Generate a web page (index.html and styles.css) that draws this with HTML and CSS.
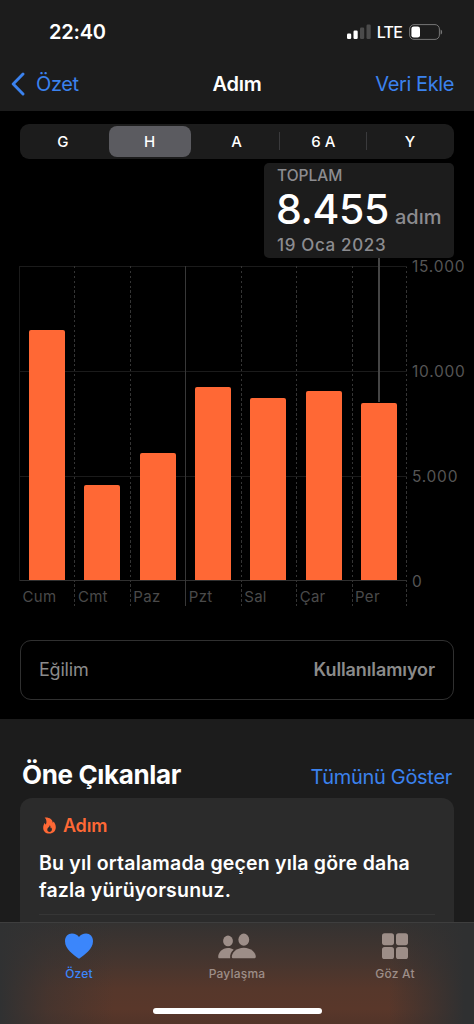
FILE: index.html
```html
<!DOCTYPE html>
<html lang="tr">
    <head>
        <meta charset="UTF-8" />
        <meta name="viewport" content="width=device-width, initial-scale=1.0" />
        <title>Adım</title>
        <link rel="stylesheet" href="styles.css">
    </head>
    <body>
        <header>
            <div class="status">
                <span class="time">22:40</span>
                <div class="indicators">
                    <svg class="signal" width="24" height="16" viewBox="0 0 24 16">
                        <rect x="0" y="9.5" width="4.2" height="5.5" rx="1.2" fill="#fff" />
                        <rect x="6.5" y="6.5" width="4.2" height="8.5" rx="1.2" fill="#fff" />
                        <rect x="13" y="3.5" width="4.2" height="11.5" rx="1.2" fill="#4b4b4b" />
                        <rect x="19.5" y="0.5" width="4.2" height="14.5" rx="1.2" fill="#4b4b4b" />
                    </svg>
                    <span class="network">LTE</span>
                    <svg class="battery" width="34" height="16" viewBox="0 0 34 16">
                        <rect x="0.6" y="0.6" width="29.8" height="14.8" rx="4.4" fill="none" stroke="#757575" />
                        <rect x="2.4" y="2.4" width="8.6" height="11.2" rx="2.4" fill="#fff" />
                        <path d="M31.6 5.4c2 .8 2 4.4 0 5.2z" fill="#757575" />
                    </svg>
                </div>
            </div>
            <nav class="navbar">
                <a class="back">
                    <svg width="14" height="24" viewBox="0 0 14 24">
                        <path d="M12 2 2.2 12 12 22" fill="none" stroke="currentColor" stroke-width="2.9" stroke-linecap="round" stroke-linejoin="round" />
                    </svg>
                    <span>Özet</span>
                </a>
                <h1>Adım</h1>
                <a class="add">Veri Ekle</a>
            </nav>
        </header>

        <main>
            <section class="steps">
                <div class="segments">
                    <div class="segment">G</div>
                    <div class="segment selected"><span>H</span></div>
                    <div class="segment">A</div>
                    <div class="segment divided">6 A</div>
                    <div class="segment divided">Y</div>
                </div>

                <div class="chart">
                    <div class="plot">
                        <div class="column"><div class="bar" style="height: 250px"></div><span>Cum</span></div>
                        <div class="column"><div class="bar" style="height: 95px"></div><span>Cmt</span></div>
                        <div class="column"><div class="bar" style="height: 127px"></div><span>Paz</span></div>
                        <div class="column week"><div class="bar" style="height: 193px"></div><span>Pzt</span></div>
                        <div class="column"><div class="bar" style="height: 182.5px"></div><span>Sal</span></div>
                        <div class="column"><div class="bar" style="height: 189.5px"></div><span>Çar</span></div>
                        <div class="column"><div class="bar" style="height: 177px"></div><span>Per</span></div>
                    </div>
                    <div class="scale">
                        <span>15.000</span>
                        <span>10.000</span>
                        <span>5.000</span>
                        <span>0</span>
                    </div>
                    <div class="marker"></div>
                    <div class="callout">
                        <div class="callout-title">TOPLAM</div>
                        <div class="callout-value"><b>8.455</b><span>adım</span></div>
                        <div class="callout-date">19 Oca 2023</div>
                    </div>
                </div>

                <div class="trend">
                    <span class="trend-name">Eğilim</span>
                    <span class="trend-value">Kullanılamıyor</span>
                </div>
            </section>

            <section class="highlights">
                <div class="highlights-head">
                    <h2>Öne Çıkanlar</h2>
                    <a>Tümünü Göster</a>
                </div>
                <article class="card">
                    <div class="card-title">
                        <svg width="13" height="17" viewBox="0 0 13 17">
                            <path fill="currentColor" fill-rule="evenodd" d="M1.6.5C6.500.1 9.600 2.300 9.700 5.700c.5-.3.7-.7.8-1.200C12 6.200 12.800 8.100 12.800 10.200c0 3.800-2.500 6.300-6.400 6.300S.2 14.200.2 10.700c0-2.100.7-3.600 1.700-4.900.1 1 .4 1.500 1 1.800C3.900 5.200 3.700 2.500 1.600.5zM6.700 8c.3 1.900-2.400 2.600-2.400 4.700 0 1.300.9 2.200 2.200 2.200s2.400-.9 2.400-2.300c0-.9-.3-1.500-.8-2-.1.500-.3.8-.6 1 .1-1.300.1-2.700-.8-3.600z" />
                        </svg>
                        <span>Adım</span>
                    </div>
                    <p>Bu yıl ortalamada geçen yıla göre daha<br>fazla yürüyorsunuz.</p>
                    <hr>
                </article>
            </section>
        </main>

        <footer class="tabs">
            <div class="tab active">
                <svg width="30" height="28" viewBox="0 0 30 28">
                    <path fill="currentColor" d="M15 26.7C9.5 22.8 1 17.2 1 9.2 1 4.7 4 1.6 7.900 1.600c3.100 0 5.700 1.200 7.100 3.500 1.400-2.300 4-3.500 7.100-3.500 3.900 0 6.900 3.100 6.900 7.600 0 8-8.500 13.600-14 17.500z" />
                </svg>
                <span>Özet</span>
            </div>
            <div class="tab">
                <svg width="38" height="28" viewBox="0 0 38 28">
                    <g fill="currentColor">
                        <ellipse cx="10" cy="8.9" rx="4.9" ry="5.3" />
                        <ellipse cx="25.8" cy="7.7" rx="5.4" ry="6.1" />
                        <path d="M12.2 26.3H1.4C.6 26.3.2 25.8.2 25c0-4.300 4-8.900 9.800-8.900 2.200 0 4.200.6 5.700 1.700-2.300 1.800-4.100 4.900-3.500 8.500z" />
                        <path d="M15.7 26.3c-1.300 0-1.900-.5-1.900-1.500 0-3.700 4.500-9 12-9s12 5.300 12 9c0 1-.6 1.500-1.900 1.500z" />
                    </g>
                </svg>
                <span>Paylaşma</span>
            </div>
            <div class="tab">
                <svg width="26" height="28" viewBox="0 0 26 28">
                    <g fill="currentColor">
                        <rect x="0" y="1.2" width="12" height="12" rx="2.6" />
                        <rect x="14" y="1.2" width="12" height="12" rx="2.6" />
                        <rect x="0" y="15" width="12" height="12" rx="2.6" />
                        <rect x="14" y="15" width="12" height="12" rx="2.6" />
                    </g>
                </svg>
                <span>Göz At</span>
            </div>
            <div class="home"></div>
        </footer>
    </body>
</html>
```
FILE: styles.css
```css
:root {
    --blue: #3b82ee;
    --orange: #ff6835;
    --panel: #1c1c1c;
    --grid: #1b1b1b;
    --dash: #343434;
}

* {
    box-sizing: border-box;
}

body {
    margin: 0;
    height: 1024px;
    display: flex;
    flex-direction: column;
    overflow: hidden;
    background: #000;
    color: #fff;
    font-family: Inter, "Liberation Sans", sans-serif;
}

h1,
h2,
p {
    margin: 0;
}

/* header */

header {
    flex: none;
    height: 111px;
    background: var(--panel);
}

.status {
    height: 62px;
    padding: 2px 31px 0 49px;
    display: flex;
    align-items: center;
    justify-content: space-between;
}

.time {
    font-size: 20px;
    font-weight: 600;
    letter-spacing: -0.2px;
}

.indicators {
    display: flex;
    align-items: center;
}

.network {
    margin: 0 7px 0 6px;
    font-size: 16px;
    font-weight: 500;
    letter-spacing: -0.8px;
}

.navbar {
    height: 44px;
    padding: 0 20px 0 11px;
    display: grid;
    grid-template-columns: 1fr auto 1fr;
    align-items: center;
    font-size: 20px;
    letter-spacing: -0.4px;
}

.back {
    display: flex;
    align-items: center;
    gap: 11px;
    color: var(--blue);
}

.add {
    color: var(--blue);
    text-align: right;
}

h1 {
    margin-left: 9px;
    font-size: 20px;
    font-weight: 600;
    letter-spacing: -0.3px;
}

/* chart */

.steps {
    height: 608px;
    padding: 12.5px 20px 0;
}

.segments {
    height: 35px;
    display: grid;
    grid-template-columns: repeat(5, 1fr);
    border-radius: 9px;
    background: var(--panel);
    font-size: 15px;
    font-weight: 500;
}

.segment {
    margin-left: -1px;
    display: flex;
    align-items: center;
    justify-content: center;
}

.selected span {
    width: 82px;
    height: 31px;
    line-height: 31px;
    border-radius: 8px;
    background: #5b5b60;
    text-align: center;
}

.divided {
    background: linear-gradient(#3a3a3c, #3a3a3c) left center / 1px 18px no-repeat;
}

.chart {
    position: relative;
    height: 340px;
    margin: 107px -20px 0;
    padding-left: 19px;
    display: flex;
}

.plot {
    width: 388px;
    height: 340px;
    display: grid;
    grid-template-columns: repeat(7, 1fr);
    background:
        linear-gradient(var(--grid), var(--grid)) 0 0 / 100% 1px no-repeat,
        linear-gradient(var(--grid), var(--grid)) 0 105px / 100% 1px no-repeat,
        linear-gradient(var(--grid), var(--grid)) 0 210px / 100% 1px no-repeat,
        linear-gradient(#303030, #303030) 0 314px / 100% 1px no-repeat,
        repeating-linear-gradient(var(--dash) 0 2.5px, transparent 2.5px 4.9px) right 0 / 1px 100% no-repeat;
}

.column {
    height: 340px;
    display: grid;
    grid-template-rows: 314.5px 1fr;
    background: repeating-linear-gradient(var(--dash) 0 2.5px, transparent 2.5px 4.9px) 0 0 / 1px 100% no-repeat;
}

.column:first-child {
    background: linear-gradient(var(--grid), var(--grid)) 0 0 / 1px 315px no-repeat;
}

.week {
    background: linear-gradient(#383838, #383838) 0 0 / 1px 100% no-repeat;
}

.bar {
    width: 36px;
    align-self: end;
    justify-self: center;
    border-radius: 2px 2px 0 0;
    background: var(--orange);
}

.column span {
    padding: 7px 0 0 3.5px;
    font-size: 15px;
    line-height: 19px;
    letter-spacing: 0.3px;
    color: #4a4a4a;
}

.scale {
    height: 334px;
    margin: -9px 0 0 5px;
    display: flex;
    flex-direction: column;
    justify-content: space-between;
    font-size: 15.5px;
    line-height: 19px;
    letter-spacing: 0.75px;
    color: #555;
}

/* selection marker and its callout lie over the chart */

.marker {
    position: absolute;
    left: 378px;
    top: -9px;
    width: 2px;
    height: 145px;
    background: #454545;
}

.callout {
    position: absolute;
    left: 264px;
    top: -103px;
    width: 190px;
    height: 95px;
    padding: 3px 13px 0;
    border-radius: 5px;
    background: var(--panel);
    color: #8c8c90;
    font-weight: 500;
    white-space: nowrap;
}

.callout-title {
    font-size: 15.5px;
    line-height: 19px;
}

.callout-value {
    height: 50px;
    margin-left: -1px;
    line-height: 49px;
}

.callout-value b {
    margin-right: 6px;
    font-size: 41px;
    font-weight: 500;
    letter-spacing: -0.4px;
    color: #fff;
}

.callout-value span {
    font-size: 20px;
    font-weight: 500;
}

.callout-date {
    font-size: 17px;
    line-height: 20px;
    font-weight: 500;
    letter-spacing: 0.65px;
}

.trend {
    height: 60px;
    margin-top: 34px;
    padding: 0 18px;
    display: flex;
    align-items: center;
    justify-content: space-between;
    border: 1px solid #303030;
    border-radius: 11px;
    font-size: 18px;
    color: #8b8b8b;
}

.trend-name {
    letter-spacing: -0.2px;
}

.trend-value {
    font-weight: 600;
    letter-spacing: -0.1px;
}

/* highlights */

.highlights {
    height: 305px;
    padding: 38px 20px 0;
    background: var(--panel);
}

.highlights-head {
    height: 41px;
    padding: 1px 2px 0;
    display: flex;
    align-items: baseline;
    justify-content: space-between;
}

h2 {
    font-size: 26px;
    line-height: 34px;
    font-weight: 700;
    letter-spacing: -0.35px;
}

.highlights-head a {
    font-size: 20px;
    letter-spacing: -0.3px;
    color: var(--blue);
}

.card {
    height: 240px;
    padding: 16px 19px 0;
    border-radius: 12px;
    background: #2b2b2b;
}

.card-title {
    height: 22px;
    padding-left: 4px;
    display: flex;
    align-items: center;
    gap: 7px;
    font-size: 18px;
    font-weight: 600;
    letter-spacing: -0.2px;
    color: var(--orange);
}

.card p {
    margin-top: 14px;
    font-size: 19.5px;
    line-height: 26.5px;
    font-weight: 600;
    letter-spacing: 0.2px;
    white-space: nowrap;
}

.card hr {
    margin: 11px 0 0;
    border: 0;
    border-top: 1px solid #363636;
}

/* tab bar covers the bottom of the page */

.tabs {
    position: absolute;
    left: 0;
    top: 922px;
    width: 100%;
    height: 102px;
    padding-top: 9px;
    display: grid;
    grid-template-columns: repeat(3, 1fr);
    border-top: 1px solid #3e3e3e;
    background:
        linear-gradient(90deg, #303132 0, rgba(48, 49, 50, 0.45) 10%, rgba(48, 49, 50, 0) 24%, rgba(48, 49, 50, 0) 82%, #2f3031 98%),
        linear-gradient(#343231, #44352f 35%, #56372b 65%, #59372a 85%, #523429);
    color: #9d8e88;
}

.tab {
    display: flex;
    flex-direction: column;
    align-items: center;
    gap: 6px;
    font-size: 12px;
    line-height: 15px;
    font-weight: 500;
    letter-spacing: 0.2px;
}

.tab.active {
    color: #3b86fb;
}

.home {
    position: absolute;
    left: 153px;
    bottom: 10px;
    width: 169px;
    height: 6px;
    border-radius: 3px;
    background: #fff;
}
```
